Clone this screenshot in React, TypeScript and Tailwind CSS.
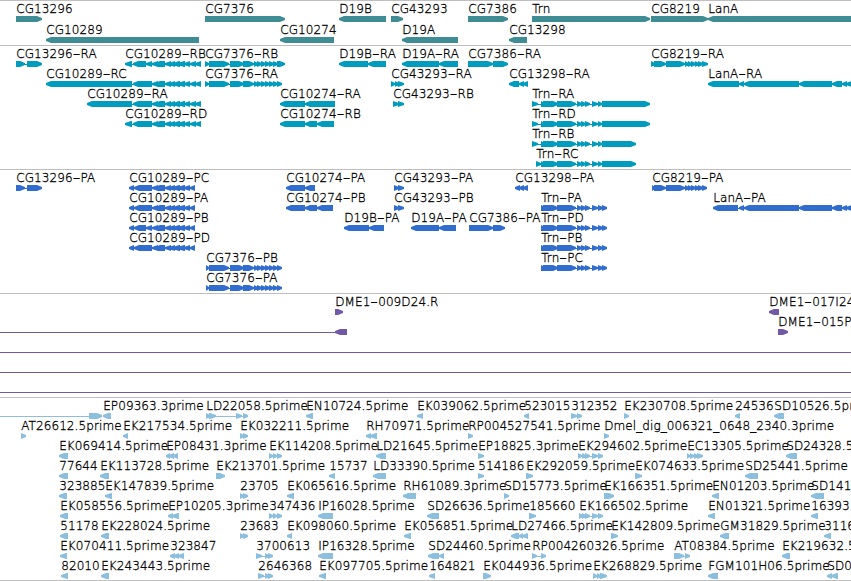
type Span = [number, number];
type Feature = { row: number; at: number; name?: string; dir: 1 | -1; parts: Span[] };
type Wire = [row: number, from: number, to: number];

const R = (row: number, name: string, ...parts: Span[]): Feature => ({ row, at: parts[0][0], name, dir: 1, parts });
const L = (row: number, name: string, ...parts: Span[]): Feature => ({ row, at: parts[0][0], name, dir: -1, parts });

const genes: Feature[] = [
  R(0, "CG13296", [16, 42]),
  L(1, "CG10289", [46, 199]),
  R(0, "CG7376", [205, 285]),
  L(1, "CG10274", [280, 334]),
  L(0, "D19B", [339, 386]),
  R(0, "CG43293", [391, 403]),
  L(1, "D19A", [402, 458]),
  R(0, "CG7386", [468, 508]),
  L(1, "CG13298", [509, 527]),
  R(0, "Trn", [532, 650]),
  R(0, "CG8219", [651, 708]),
  L(0, "LanA", [708, 870]),
];

const tail10289: Span[] = [[152, 158], [155, 165], [165, 171], [169, 175], [173, 180], [178, 185], [184, 190]];
const end10289: Span[] = [...tail10289, [190, 196], [195, 201]];
const endP10289: Span[] = [...tail10289, [190, 195]];
const mid7376: Span[] = [[209, 229], [230, 244], [243, 254], [254, 258], [257, 262], [261, 266], [265, 270], [269, 274], [273, 278]];
const midTrn: Span[] = [[541, 545], [543, 558], [557, 576], [577, 582], [581, 586], [585, 590], [592, 598]];
const mid8219: Span[] = [[654, 666], [666, 685], [685, 689], [688, 692], [691, 696], [695, 699], [698, 703]];
const endLanA: Span[] = [[739, 744], [744, 799], [799, 832], [832, 842], [842, 847], [846, 853]];

const transcripts: Feature[] = [
  R(0, "CG13296-RA", [16, 25], [27, 42]),
  L(0, "CG10289-RB", [125, 132], [133, 146], [146, 152], ...end10289),
  L(1, "CG10289-RC", [46, 132], [133, 152], ...end10289),
  L(2, "CG10289-RA", [87, 132], [133, 152], ...end10289),
  L(3, "CG10289-RD", [125, 132], [133, 152], ...end10289),
  R(0, "CG7376-RB", [205, 209], ...mid7376, [277, 285]),
  R(1, "CG7376-RA", [205, 209], ...mid7376, [277, 282]),
  L(2, "CG10274-RA", [280, 305], [305, 335]),
  L(3, "CG10274-RB", [280, 305], [305, 317], [317, 334]),
  L(0, "D19B-RA", [339, 368], [368, 386]),
  L(0, "D19A-RA", [402, 439], [439, 458]),
  R(0, "CG7386-RA", [468, 493], [493, 508]),
  R(1, "CG43293-RA", [391, 395], [395, 399], [398, 404]),
  R(2, "CG43293-RB", [393, 399], [398, 404]),
  L(1, "CG13298-RA", [509, 519], [519, 524], [523, 528]),
  R(2, "Trn-RA", [532, 538], ...midTrn, [598, 602], [602, 650]),
  R(3, "Trn-RD", [532, 538], ...midTrn, [598, 602], [602, 650]),
  R(4, "Trn-RB", [532, 538], ...midTrn, [598, 602], [602, 636]),
  R(5, "Trn-RC", [536, 541], ...midTrn, [598, 602], [602, 636]),
  R(0, "CG8219-RA", [651, 655], ...mid8219, [702, 708]),
  L(1, "LanA-RA", [708, 739], ...endLanA),
];

const proteins: Feature[] = [
  R(0, "CG13296-PA", [16, 25], [27, 42]),
  L(0, "CG10289-PC", [129, 134], [134, 152], ...endP10289),
  L(1, "CG10289-PA", [129, 134], [134, 152], ...endP10289),
  L(2, "CG10289-PB", [129, 134], [134, 146], [146, 152], ...endP10289),
  L(3, "CG10289-PD", [129, 134], [134, 152], ...endP10289),
  R(4, "CG7376-PB", [206, 209], ...mid7376, [277, 282]),
  R(5, "CG7376-PA", [206, 209], ...mid7376, [277, 282]),
  L(0, "CG10274-PA", [286, 305], [305, 315]),
  L(1, "CG10274-PB", [286, 305], [305, 317], [317, 333]),
  L(2, "D19B-PA", [344, 369], [369, 384]),
  R(0, "CG43293-PA", [394, 399], [398, 404]),
  R(1, "CG43293-PB", [394, 399], [398, 404]),
  L(2, "D19A-PA", [411, 439], [439, 456]),
  R(2, "CG7386-PA", [469, 493], [493, 505]),
  L(0, "CG13298-PA", [515, 520], [519, 524], [523, 528]),
  R(1, "Trn-PA", ...midTrn, [598, 603], [602, 607]),
  R(2, "Trn-PD", ...midTrn, [598, 603], [602, 607]),
  R(3, "Trn-PB", ...midTrn, [598, 603], [602, 607]),
  R(4, "Trn-PC", ...midTrn, [598, 603], [602, 607]),
  R(0, "CG8219-PA", [652, 655], ...mid8219, [702, 707]),
  L(1, "LanA-PA", [713, 738], ...endLanA),
];

const clones: Feature[] = [
  R(0, "DME1-009D24.R", [335, 343]),
  L(1, "", [335, 347]),
  L(0, "DME1-017I24", [769, 779]),
  R(1, "DME1-015P", [778, 788]),
];

const ests: Feature[] = [
  R(0, "", [89, 102]),
  L(0, "EP09363.3prime", [103, 111]),
  R(0, "LD22058.5prime", [206, 210], [209, 216], [236, 242], [243, 248]),
  L(0, "EN10724.5prime", [306, 313]),
  L(0, "EK039062.5prime", [417, 423]),
  L(0, "523015", [524, 529]),
  R(0, "312352", [571, 577], [577, 582]),
  R(0, "EK230708.5prime", [624, 629]),
  L(0, "24536", [735, 740]),
  L(0, "SD10526.5prime", [774, 784]),
  R(1, "AT26612.5prime", [21, 26]),
  L(1, "EK217534.5prime", [123, 128]),
  R(1, "EK032211.5prime", [240, 244], [243, 248]),
  L(1, "RH70971.5prime", [366, 371], [370, 377]),
  R(1, "RP004527541.5prime", [468, 473]),
  R(1, "Dmel_dig_006321_0648_2340.3prime", [604, 609]),
  L(2, "EK069414.5prime", [59, 68]),
  L(2, "EP08431.3prime", [166, 170], [169, 174], [173, 178]),
  R(2, "EK114208.5prime", [269, 273], [273, 277], [277, 282]),
  L(2, "LD21645.5prime", [376, 386]),
  R(2, "EP18825.3prime", [478, 484]),
  R(2, "EK294602.5prime", [578, 582], [582, 586], [585, 590], [592, 598], [598, 603]),
  R(2, "EC13305.5prime", [687, 690], [690, 694], [694, 698], [697, 703]),
  L(2, "SD24328.5prime", [786, 797]),
  L(3, "77644", [59, 68]),
  L(3, "EK113728.5prime", [100, 109]),
  R(3, "EK213701.5prime", [216, 225]),
  L(3, "15737", [329, 335]),
  L(3, "LD33390.5prime", [373, 386]),
  R(3, "514186", [478, 484]),
  R(3, "EK292059.5prime", [526, 533]),
  R(3, "EK074633.5prime", [635, 642]),
  L(3, "SD25441.5prime", [745, 758]),
  L(4, "323885", [59, 67]),
  L(4, "EK147839.5prime", [105, 112]),
  R(4, "23705", [240, 244], [243, 248]),
  L(4, "EK065616.5prime", [287, 294]),
  L(4, "RH61089.3prime", [403, 416]),
  R(4, "SD15773.5prime", [504, 509]),
  R(4, "EK166351.5prime", [604, 614]),
  L(4, "EN01203.5prime", [712, 719]),
  L(4, "SD141", [811, 824]),
  L(5, "EK058556.5prime", [60, 68]),
  L(5, "EP10205.3prime", [168, 173], [172, 179]),
  R(5, "347436", [269, 273], [273, 277], [277, 282]),
  L(5, "IP16028.5prime", [318, 333]),
  L(5, "SD26636.5prime", [427, 439]),
  R(5, "185660", [529, 536]),
  R(5, "EK166502.5prime", [579, 583], [582, 586], [585, 590], [592, 598], [598, 603]),
  L(5, "EN01321.5prime", [708, 715]),
  L(5, "16393", [811, 818]),
  L(6, "51178", [60, 68]),
  L(6, "EK228024.5prime", [101, 109]),
  R(6, "23683", [240, 244], [243, 248]),
  L(6, "EK098060.5prime", [287, 292]),
  L(6, "EK056851.5prime", [404, 411]),
  L(6, "LD27466.5prime", [511, 519], [519, 523], [522, 528]),
  R(6, "EK142809.5prime", [611, 618]),
  L(6, "GM31829.5prime", [720, 729]),
  L(6, "3116", [824, 831]),
  L(7, "EK070411.5prime", [60, 67]),
  L(7, "323847", [170, 175], [174, 179], [178, 184]),
  R(7, "3700613", [256, 262], [265, 269], [268, 273]),
  L(7, "IP16328.5prime", [318, 333]),
  L(7, "SD24460.5prime", [428, 439], [439, 444]),
  R(7, "RP004260326.5prime", [532, 537], [541, 546]),
  R(7, "AT08384.5prime", [674, 684], [685, 690]),
  L(7, "EK219632.5prime", [782, 790]),
  L(8, "82010", [61, 68]),
  L(8, "EK243443.5prime", [101, 109]),
  R(8, "2646368", [258, 264], [265, 269], [268, 273]),
  L(8, "EK097705.5prime", [319, 326]),
  L(8, "164821", [429, 435]),
  R(8, "EK044936.5prime", [483, 491]),
  R(8, "EK268829.5prime", [593, 597], [597, 601], [600, 607]),
  L(8, "FGM101H06.5prime", [708, 718]),
  L(8, "SD0", [827, 832], [831, 838]),
];

// A block with a pointed end on the strand's side.
function arrow([a, b]: Span, dir: 1 | -1, y: number) {
  const head = Math.min(6, b - a);
  const tip = dir === 1 ? b : a;
  const neck = tip - dir * head;
  const base = dir === 1 ? a : b;
  const flat = b - a > 7 ? neck + dir : neck;
  return `M${base} ${y}H${flat}L${tip} ${y + 2}v2L${flat} ${y + 6}H${base}z`;
}

// The label's dash is drawn wider than the font's own hyphen.
function Label({ x, y, name }: { x: number; y: number; name: string }) {
  const [head, tail] = name.split("-");
  return (
    <text
      x={x + 0.2}
      y={y}
      className="fill-black stroke-black stroke-[0.3px] text-[12px] font-extralight tracking-[0.09px]"
    >
      {head}
      {tail && (
        <tspan textLength={7.8} lengthAdjust="spacingAndGlyphs">
          -
        </tspan>
      )}
      {tail}
    </text>
  );
}

type TrackProps = { features: Feature[]; wires?: Wire[]; pitch?: number; height: string; color: string };

function Track({ features, wires = [], pitch = 20, height, color }: TrackProps) {
  return (
    <section className={`w-full shrink-0 border-t border-[#bebebe] ${height}`}>
      <svg className={`block h-full w-full overflow-hidden ${color}`}>
        {wires.map(([row, from, to], i) => (
          <rect key={i} x={from} y={row * pitch + 18} width={to - from} height={1} fill="currentColor" />
        ))}
        {features.map((f, i) => {
          const y = f.row * pitch + 15;
          const last = f.parts[f.parts.length - 1];
          return (
            <g key={i}>
              {f.parts.length > 1 && <rect x={f.at} y={y + 3} width={last[1] - f.at} height={1} fill="currentColor" />}
              <path d={f.parts.map((p) => arrow(p, f.dir, y)).join("")} fill="currentColor" />
              {f.name && <Label x={f.at} y={f.row * pitch + 12} name={f.name} />}
            </g>
          );
        })}
      </svg>
    </section>
  );
}

export default function App() {
  return (
    <main className="flex h-[581px] w-[851px] flex-col overflow-hidden border-b border-[#bebebe] bg-white font-['DejaVu_Sans',sans-serif]">
      <Track features={genes} pitch={21} height="h-[45px]" color="text-[#408c94]" />
      <Track features={transcripts} height="h-[124px]" color="text-[#009cbd]" />
      <Track features={proteins} height="h-[124px]" color="text-[#316dce]" />
      <Track
        features={clones}
        wires={[[1, 0, 336], [2, 0, 851], [3, 0, 851], [4, 0, 851]]}
        height="h-[104px]"
        color="text-[#7359a5]"
      />
      <Track features={ests} wires={[[0, 0, 90]]} height="h-[183px]" color="text-[#8cbede]" />
    </main>
  );
}
